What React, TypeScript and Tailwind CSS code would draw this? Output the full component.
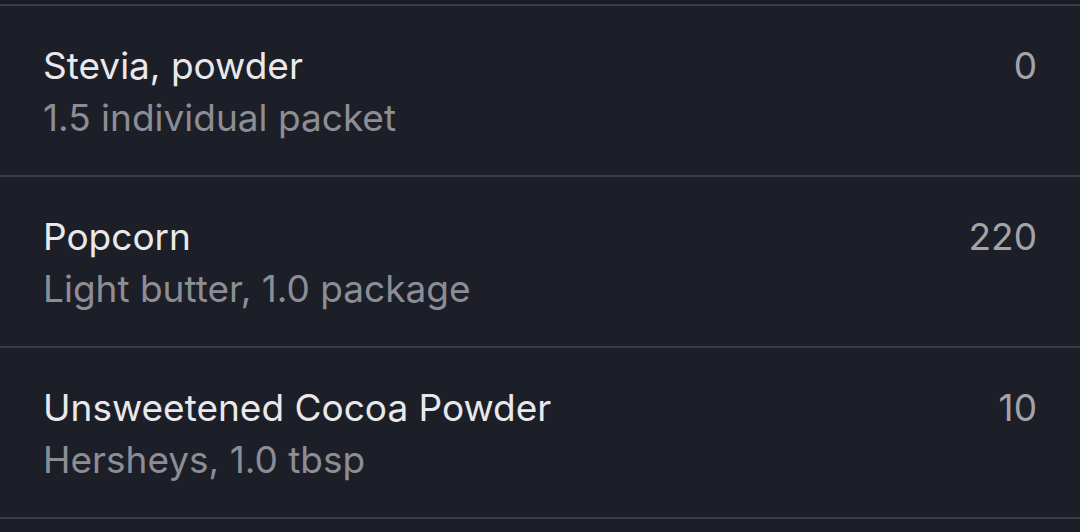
import React from 'react';

type Entry = { name: string; detail: string; kcal: number };

const entries: Entry[] = [
  { name: 'Stevia, powder', detail: '1.5 individual packet', kcal: 0 },
  { name: 'Popcorn', detail: 'Light butter, 1.0 package', kcal: 220 },
  { name: 'Unsweetened Cocoa Powder', detail: 'Hersheys, 1.0 tbsp', kcal: 10 },
];

export default function App() {
  return (
    <div
      className="w-[1080px] h-[532px] bg-[#1d1f28] overflow-hidden"
      style={{ fontFamily: 'Inter, "Noto Sans", sans-serif' }}
    >
      <div className="h-[4px] bg-[#1a1c24]" />
      {entries.map((e) => (
        <div
          key={e.name}
          className="flex justify-between items-start border-t-2 border-[#3a3c45] pl-[43px] pr-[43px] pt-[34px] h-[171px]"
        >
          <div className="flex flex-col">
            <span className="text-[37px] leading-[52px] text-[#e9e9ec]">{e.name}</span>
            <span className="text-[37px] leading-[52px] text-[#8d8e95]">{e.detail}</span>
          </div>
          <span className="text-[37px] leading-[52px] text-[#a3a4aa]">{e.kcal}</span>
        </div>
      ))}
      <div className="border-t-2 border-[#3a3c45]" />
    </div>
  );
}
